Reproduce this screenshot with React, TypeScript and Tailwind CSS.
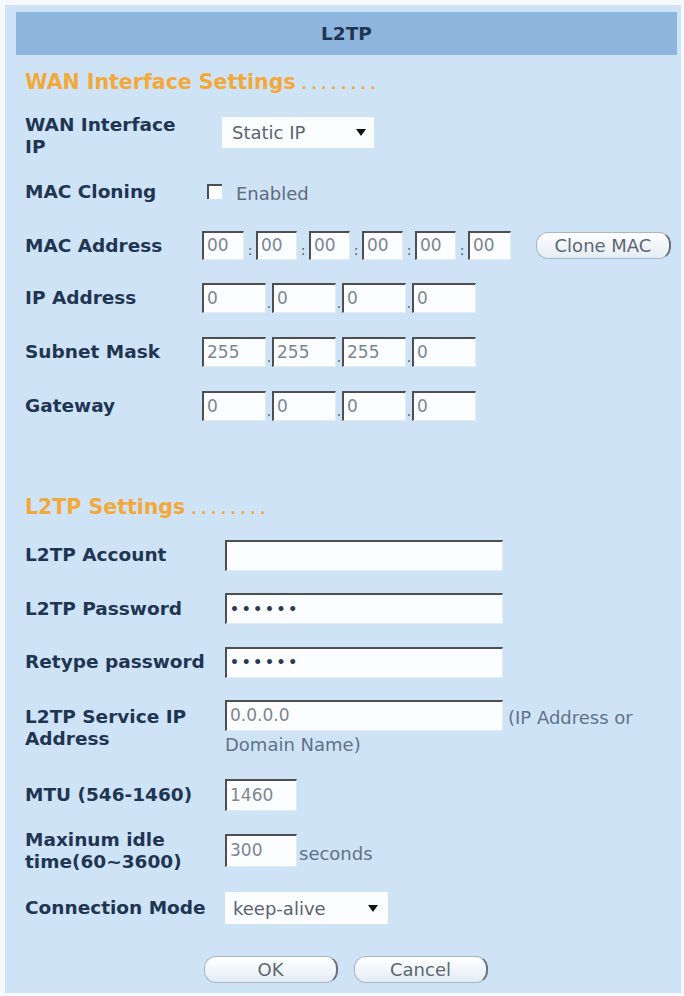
import React from 'react';

const Label = ({ children, w }: { children: React.ReactNode; w: string }) => (
  <div className={`${w} shrink-0 text-[18.5px] leading-[22px] font-bold text-[#1f3653]`}>{children}</div>
);

const Field = ({ w, h, value, dots }: { w: string; h: string; value?: string; dots?: boolean }) => (
  <div
    className={`${w} ${h} shrink-0 flex items-center pl-[3px] bg-[#fbfdff] border-t-2 border-l-2 border-[#4d4f52] border-r border-b border-r-[#e2eaf2] border-b-[#e2eaf2] overflow-hidden whitespace-nowrap ${
      dots ? 'text-[14px] font-bold text-[#2b3a50] tracking-[2.7px]' : 'text-[17px] text-[#7b8692]'
    }`}
  >
    {value}
  </div>
);

const Caret = () => (
  <svg width="10" height="7" viewBox="0 0 10 7">
    <polygon points="0,0 10,0 5,7" fill="#111" />
  </svg>
);

const PillButton = ({ children, w }: { children: React.ReactNode; w: string }) => (
  <div
    className={`${w} h-[27px] flex items-center justify-center rounded-[12px] border border-[#aab6c2] border-r-2 border-r-[#68727d] bg-gradient-to-b from-white to-[#e4ecf4] text-[18px] text-[#5c6772]`}
  >
    {children}
  </div>
);

const Sep = ({ ch }: { ch: string }) => (
  <span className="self-end pb-[3px] text-[14px] leading-[14px] text-[#555]">{ch}</span>
);

const App = () => {
  const ipRows = [
    { label: 'IP Address', values: ['0', '0', '0', '0'] },
    { label: 'Subnet Mask', values: ['255', '255', '255', '0'] },
    { label: 'Gateway', values: ['0', '0', '0', '0'] }
  ];

  return (
    <div className="min-h-[996px] bg-[#f6f9fc] pt-[5px] pl-[5px] font-['DejaVu_Sans',sans-serif]">
      <div className="w-[676px] h-[988px] bg-[#cfe3f7] flex flex-col">
        {/* title bar */}
        <div className="mt-[7px] ml-[11px] mr-[4px] h-[43px] flex items-center justify-center bg-[#8db5dd] text-[18.5px] font-bold text-[#1f3653]">
          L2TP
        </div>

        {/* WAN section */}
        <div className="h-[54px] flex items-center px-[20px] text-[20.5px] font-bold text-[#f2a93a]">
          WAN Interface Settings
          <span className="ml-[6px] mt-[4px] font-bold text-[14px] tracking-[4.5px]">........</span>
        </div>

        <div className="h-[54px] flex items-center px-[20px]">
          <Label w="w-[197px]">
            WAN Interface
            <br />
            IP
          </Label>
          <div className="self-start mt-[8px] w-[152px] h-[31px] bg-[#fcfdff] flex items-center justify-between pl-[10px] pr-[8px] text-[18px] text-[#5a6470]">
            Static IP
            <Caret />
          </div>
        </div>

        <div className="h-[57px] flex items-center px-[20px]">
          <Label w="w-[177px]">MAC Cloning</Label>
          <div className="ml-[5px] w-[15px] h-[15px] bg-[#fbfdff] border-t-2 border-l-2 border-[#4d4f52]" />
          <span className="ml-[14px] mt-[3px] text-[18px] text-[#5e6b7a]">Enabled</span>
        </div>

        <div className="h-[51px] flex items-center px-[20px]">
          <Label w="w-[177px]">MAC Address</Label>
          <div className="flex h-[29px]">
            <Field w="w-[42px]" h="h-[29px]" value="00" />
            {['00', '00', '00', '00', '00'].map((v, i) => (
              <React.Fragment key={i}>
                <span className="w-[12px] flex justify-center">
                  <Sep ch=":" />
                </span>
                <Field w={i === 4 ? 'w-[43px]' : 'w-[41px]'} h="h-[29px]" value={v} />
              </React.Fragment>
            ))}
          </div>
          <div className="ml-[25px]">
            <PillButton w="w-[135px]">Clone MAC</PillButton>
          </div>
        </div>

        {ipRows.map((row) => (
          <div key={row.label} className="h-[54px] flex items-center px-[20px]">
            <Label w="w-[177px]">{row.label}</Label>
            <div className="flex h-[30px]">
              {row.values.map((v, i) => (
                <React.Fragment key={i}>
                  {i > 0 && (
                    <span className="w-[6px] flex justify-center">
                      <Sep ch="." />
                    </span>
                  )}
                  <Field w="w-[64px]" h="h-[30px]" value={v} />
                </React.Fragment>
              ))}
            </div>
          </div>
        ))}

        <div className="h-[53px]" />

        {/* L2TP section */}
        <div className="h-[42px] flex items-center px-[20px] text-[20.5px] font-bold text-[#f2a93a]">
          L2TP Settings
          <span className="ml-[6px] mt-[4px] font-bold text-[14px] tracking-[4.5px]">........</span>
        </div>

        <div className="h-[54px] flex items-center px-[20px]">
          <Label w="w-[200px]">L2TP Account</Label>
          <Field w="w-[278px]" h="h-[31px]" />
        </div>

        <div className="h-[53px] flex items-center px-[20px]">
          <Label w="w-[200px]">L2TP Password</Label>
          <Field w="w-[278px]" h="h-[31px]" value="••••••" dots />
        </div>

        <div className="h-[54px] flex items-center px-[20px]">
          <Label w="w-[200px]">Retype password</Label>
          <Field w="w-[278px]" h="h-[31px]" value="••••••" dots />
        </div>

        <div className="h-[79px] flex items-start px-[20px]">
          <div className="pt-[17px]">
            <Label w="w-[200px]">
              L2TP Service IP
              <br />
              Address
            </Label>
          </div>
          <div className="pt-[11px] flex flex-col">
            <div className="flex items-center">
              <Field w="w-[278px]" h="h-[31px]" value="0.0.0.0" />
              <span className="ml-[5px] mt-[4px] text-[18px] text-[#5f7288] whitespace-nowrap">(IP Address or</span>
            </div>
            <span className="mt-[3px] text-[18px] leading-[22px] text-[#5f7288]">Domain Name)</span>
          </div>
        </div>

        <div className="h-[54px] flex items-center px-[20px]">
          <Label w="w-[200px]">MTU (546-1460)</Label>
          <Field w="w-[72px]" h="h-[32px]" value="1460" />
        </div>

        <div className="h-[57px] flex items-center px-[20px]">
          <Label w="w-[200px]">
            Maxinum idle
            <br />
            time(60~3600)
          </Label>
          <Field w="w-[72px]" h="h-[33px]" value="300" />
          <span className="ml-[2px] mt-[6px] text-[18px] text-[#5f7288]">seconds</span>
        </div>

        <div className="h-[58px] flex items-center px-[20px]">
          <Label w="w-[200px]">Connection Mode</Label>
          <div className="w-[163px] h-[32px] bg-[#fcfdff] flex items-center justify-between pl-[8px] pr-[10px] text-[18px] text-[#5a6470]">
            keep-alive
            <Caret />
          </div>
        </div>

        <div className="mt-[19px] flex justify-center gap-[16px] pl-[6px]">
          <PillButton w="w-[134px]">OK</PillButton>
          <PillButton w="w-[134px]">Cancel</PillButton>
        </div>
      </div>
    </div>
  );
};

export default App;
